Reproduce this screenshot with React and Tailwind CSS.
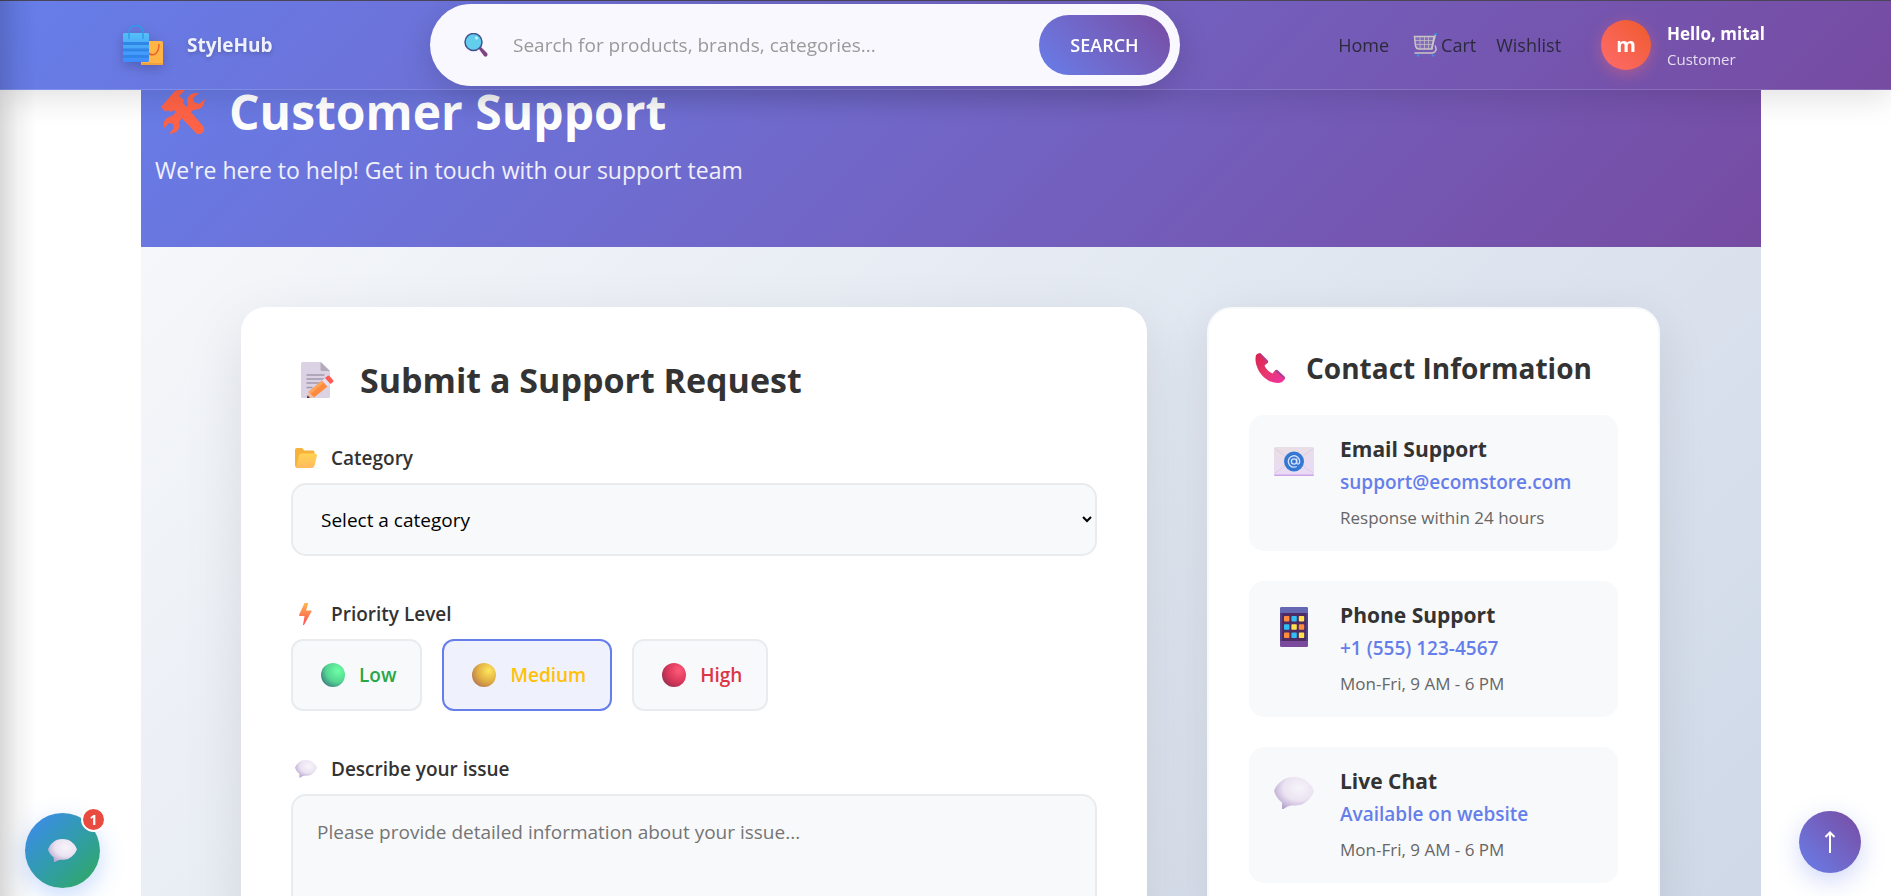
import React from "react";

const FONT = "font-['Open_Sans','Noto_Sans',sans-serif]";

function BagsIcon() {
  return (
    <svg viewBox="0 0 40 40" className="size-10 shrink-0 drop-shadow-[0_4px_6px_rgba(0,0,0,0.2)]" aria-hidden="true">
      <defs>
        <linearGradient id="bagBlue" x1="0" y1="0" x2="0" y2="1">
          <stop offset="0" stopColor="#55c0f5" />
          <stop offset="1" stopColor="#3d8bff" />
        </linearGradient>
      </defs>
      <rect x="18" y="16" width="22" height="24" rx="1.5" fill="#ffb545" />
      <rect x="18" y="38" width="22" height="2" rx="1" fill="#f0a040" />
      <path d="M24 26q3 5 7 3.500 5-2 5-10.500" fill="none" stroke="#e8622f" strokeWidth="1.500" />
      <rect x="0" y="8" width="26" height="29" rx="1.500" fill="url(#bagBlue)" />
      <path d="M0 17h26v3H0zM0 23.500h26v3H0zM0 30h26v3H0z" fill="#2f86e6" />
      <path d="M6 14V8q0-7.500 7-7.500t7 7.500v6" fill="none" stroke="#2f9be8" strokeWidth="1.400" />
    </svg>
  );
}

function MagnifierIcon() {
  return (
    <svg viewBox="0 0 24 24" className="size-6 shrink-0" aria-hidden="true">
      <path d="M14.500 15.500l2-2 6.500 6.500q1 1.500 0 3t-3 0z" fill="#7e4482" />
      <circle cx="9.500" cy="9" r="8.500" fill="#63cdec" stroke="#43518f" strokeWidth="1.500" />
      <circle cx="12.500" cy="5" r="1.500" fill="#c4f1ff" />
    </svg>
  );
}

function CartIcon() {
  return (
    <svg viewBox="0 0 24 24" className="size-6 shrink-0" aria-hidden="true">
      <path d="M1.500 3.500h19.500L19 16H5.500Q3 15.500 2.500 13z" fill="#c9c4c6" fillOpacity="0.2" stroke="#c9c4c6" strokeWidth="1.500" />
      <path d="M2 7.500h18M2.500 11.500h17M7 3v13M11.500 3v13M15.500 3v13" stroke="#c9c4c6" strokeWidth="0.700" />
      <path d="M22.500 1.500 18.500 16M22 12.500q3 6-2.500 7.500H1.500" fill="none" stroke="#c9c4c6" strokeWidth="1.500" />
      <path d="M21.500 1.200H24" stroke="#3792dc" strokeWidth="2" />
      <circle cx="5" cy="22.500" r="1.300" fill="#3792dc" />
      <circle cx="20" cy="22.500" r="1.300" fill="#3792dc" />
    </svg>
  );
}

function ToolsIcon() {
  return (
    <svg viewBox="0 0 44 44" className="size-11 shrink-0" aria-hidden="true">
      <g fill="#ff6347">
        <path d="M0 17 13 2q2-2 5-2h6l-6 6 5 4-1 3 20 23q3 4-1 7t-7-1L13 20l-3 2-4-2-1 2z" />
        <path d="M35 3q-8 0-9 8l1 4-6 7 5 5 6-7q11 1 12-11l-6 5-5-2-1-4 6-5z" />
        <path d="m15 22 6 6-3 4q2 8-5 11l-5 1 5-6-1-4-4-1-5 5q-2-10 8-12z" />
      </g>
    </svg>
  );
}

function MemoIcon() {
  return (
    <svg viewBox="0 0 34 36" className="h-9 w-[34px] shrink-0" aria-hidden="true">
      <path d="M1.500 0H20l9 9v25.500q0 1.500-1.500 1.500h-26Q0 36 0 34.500v-33Q0 0 1.500 0z" fill="#dbd2e4" />
      <path d="M19.500 0 29 9h-8q-1.500 0-1.500-1.500z" fill="#b3aabb" />
      <path d="M5.500 13h18M5.500 17h18M5.500 21h14M5.500 25.500h6" stroke="#a299ad" strokeWidth="1.300" />
      <path d="M7.500 30 21 18.500l5.500 6L13 35.500z" fill="#ff8a3d" />
      <path d="M7.500 30 21 18.500l2 2L9.500 32z" fill="#ffa45c" />
      <path d="m21 18.500 3-2.500 5.500 6-3 2.500z" fill="#e6e0f2" />
      <path d="m24 16 2.500-2q1-1 2 0l3.500 4q1 1 0 2l-2.500 2z" fill="#ff5a4e" />
      <path d="M7.500 30 13 35.500 6 36z" fill="#eebba5" />
      <path d="M6.500 33.500 9 35.700 6 36z" fill="#3d2030" />
    </svg>
  );
}

function FolderIcon() {
  return (
    <svg viewBox="0 0 22 20" className="h-5 w-[22px] shrink-0" aria-hidden="true">
      <defs>
        <linearGradient id="folder" x1="0" y1="0" x2="0" y2="1">
          <stop offset="0" stopColor="#ffd452" />
          <stop offset="1" stopColor="#ffba5e" />
        </linearGradient>
      </defs>
      <path d="M0 2Q0 0 2 0h5l2.500 2.500H18q1.500 0 1.500 2V17L3 20Q0 20 0 17z" fill="#f7b23b" />
      <path d="M4 7.500Q4.500 5.500 6.500 5.500H20q2 0 2 2l-2.500 10q-.5 2.500-3 2.500H2q-1 0-.5-2z" fill="url(#folder)" />
    </svg>
  );
}

function BoltIcon() {
  return (
    <svg viewBox="0 0 22 22" className="size-[22px] shrink-0" aria-hidden="true">
      <defs>
        <linearGradient id="bolt" x1="0" y1="0" x2="0" y2="1">
          <stop offset="0" stopColor="#ffb64c" />
          <stop offset="1" stopColor="#fb4e57" />
        </linearGradient>
      </defs>
      <path d="M9.500 0h3q1 0 .6 1L11 7.500h5q1 0 .5 1L9 22H8l1.500-9H5q-1.500 0-1-1z" fill="url(#bolt)" />
    </svg>
  );
}

function BubbleIcon({ className, id }) {
  return (
    <svg viewBox="0 0 40 32" className={className} aria-hidden="true">
      <defs>
        <radialGradient id={id} cx="0.62" cy="0.35" r="0.7">
          <stop offset="0" stopColor="#f7f4fa" />
          <stop offset="0.55" stopColor="#ebe3f1" />
          <stop offset="1" stopColor="#b7a5d0" />
        </radialGradient>
      </defs>
      <path d="M20 0q8 0 13 4.500Q38 8 40 14q-2 6-7 10-4 4-11 4.500h-5q-4 .5-6 2.500-2 1.500-3 1v-6.500Q2 21 0 14q2-6 7-9.500Q12 0 20 0z" fill={`url(#${id})`} />
    </svg>
  );
}

function Ball({ id, light, mid, dark }) {
  return (
    <svg viewBox="0 0 24 24" className="size-6 shrink-0" aria-hidden="true">
      <defs>
        <radialGradient id={id} cx="0.7" cy="0.32" r="0.8">
          <stop offset="0" stopColor={light} />
          <stop offset="0.6" stopColor={mid} />
          <stop offset="1" stopColor={dark} />
        </radialGradient>
      </defs>
      <circle cx="12" cy="12" r="12" fill={`url(#${id})`} />
    </svg>
  );
}

function ReceiverIcon() {
  return (
    <svg viewBox="0 0 30 30" className="size-[30px] shrink-0" aria-hidden="true">
      <defs>
        <linearGradient id="receiver" x1="0" y1="0" x2="1" y2="1">
          <stop offset="0" stopColor="#d8204f" />
          <stop offset="0.5" stopColor="#e9386c" />
          <stop offset="1" stopColor="#ee2fa5" />
        </linearGradient>
      </defs>
      <path d="M1 2Q3-.5 5.500.5L13 8q.5 1-.5 2l-3 2.500q2 5 8 8l2.500-3q1-1 2.500 0l7 6.500q1 1.500-.5 3-2 3-6 3Q12 30 4.500 19-1 10 1 2z" fill="url(#receiver)" />
      <path d="M4 0q1-.3 2 .8l7 7.200q.5 1-.8 2z" fill="#b13d94" />
      <path d="M20 18q1.500-2 3-.5l6.500 6q1 1.500 0 2.500z" fill="#a9418f" />
    </svg>
  );
}

function EmailIcon() {
  return (
    <svg viewBox="0 0 40 29" className="w-10" aria-hidden="true">
      <defs>
        <linearGradient id="mail" x1="0" y1="0" x2="0.3" y2="1">
          <stop offset="0" stopColor="#e9dfe2" />
          <stop offset="1" stopColor="#e9daf6" />
        </linearGradient>
      </defs>
      <rect width="40" height="29" rx="1.500" fill="url(#mail)" />
      <path d="M1 1.500 16 13M39 1.500 24 13M1 26l13-9M39 26l-13-9" stroke="#d6c8de" strokeWidth="0.800" />
      <path d="M0 27.500h40q0 1.500-1.500 1.500h-37Q0 29 0 27.500z" fill="#cba6e8" />
      <circle cx="20" cy="14.500" r="10" fill="#3478d4" />
      <circle cx="20" cy="14.500" r="2.600" fill="none" stroke="#d9e3fa" strokeWidth="1.300" />
      <path d="M22.700 11.500v4q.3 2 1.800 1.500 1.200-.5 1.200-2.500a5.700 5.700 0 1 0-3 5" fill="none" stroke="#d9e3fa" strokeWidth="1.300" />
    </svg>
  );
}

const KEYS = ["#ff8b3d", "#33bdf5", "#ffe14f", "#33bdf5", "#ffe14f", "#ff8b3d", "#ff8b3d", "#33bdf5", "#ffe14f"];

function MobileIcon() {
  return (
    <svg viewBox="0 0 28 40" className="h-10 w-7" aria-hidden="true">
      <rect width="28" height="40" rx="2" fill="#50408d" />
      <path d="M0 6V2q0-2 2-2h24q2 0 2 2v4z" fill="#6468b3" />
      <path d="M0 34h28v4q0 2-2 2H2q-2 0-2-2z" fill="#7b4a9c" />
      <rect x="2" y="6" width="24" height="28" fill="#4e2c62" />
      {KEYS.map((fill, i) => (
        <rect key={i} x={4 + (i % 3) * 7.4} y={9 + Math.floor(i / 3) * 8.3} width="5.400" height="5.400" rx="0.800" fill={fill} />
      ))}
    </svg>
  );
}

function Header() {
  return (
    <header className="fixed inset-x-0 top-0 z-20 flex h-[90px] items-center border-t border-b border-t-[#4a4658] border-b-white/15 bg-linear-135 from-[#667eea] to-[#764ba2] pr-[126px] pl-[123px] shadow-[0_8px_32px_rgba(0,0,0,0.12)]">
      <a href="#top" className="flex w-[307px] shrink-0 items-center gap-6 text-[19px] font-bold text-[#eef0fb] [text-shadow:0_2px_4px_rgba(0,0,0,0.2)]">
        <BagsIcon />
        StyleHub
      </a>
      <form
        className="flex h-[82px] max-w-[750px] flex-1 items-center rounded-[41px] bg-[#f8f8fe] pr-[10px] pl-[34px] shadow-[0_8px_32px_rgba(0,0,0,0.15)]"
        onSubmit={(e) => e.preventDefault()}
      >
        <MagnifierIcon />
        <input
          type="text"
          aria-label="Search"
          placeholder="Search for products, brands, categories..."
          className="min-w-0 flex-1 bg-transparent pl-[25px] text-[19px] outline-none placeholder:text-[#9a9a9a]"
        />
        <button type="submit" className="h-[60px] w-[131px] rounded-[30px] bg-linear-45 from-[#667eea] to-[#764ba2] text-[18px] font-semibold text-white">
          SEARCH
        </button>
      </form>
      <nav className="ml-auto flex items-center text-[18px] text-[#2b2a3c]">
        <a href="#home">Home</a>
        <a href="#cart" className="ml-6 flex items-center gap-1">
          <CartIcon />
          Cart
        </a>
        <a href="#wishlist" className="ml-5">Wishlist</a>
      </nav>
      <div className="ml-10 flex items-center gap-4">
        <span className="flex size-[50px] items-center justify-center rounded-full bg-linear-45 from-[#ff6b6b] to-[#ee5a24] text-[20px] font-bold text-white shadow-[0_4px_15px_rgba(255,107,107,0.4)]">
          m
        </span>
        <span className="flex flex-col gap-px pt-[2px] whitespace-nowrap text-white">
          <span className="text-[17px] leading-6 font-bold">Hello, mital</span>
          <span className="text-[15px] leading-6 text-white/80">Customer</span>
        </span>
      </div>
    </header>
  );
}

function Hero() {
  return (
    <section className="flex h-[247px] flex-col bg-linear-135 from-[#667eea] to-[#764ba2] px-[14px] pt-20 text-white">
      <h1 className="flex items-center gap-6 pl-[6px] text-[48px] leading-[64px] font-bold">
        <ToolsIcon />
        Customer Support
      </h1>
      <p className="mt-[10px] text-[23px] leading-8 text-white/90">We're here to help! Get in touch with our support team</p>
    </section>
  );
}

const PRIORITIES = [
  { name: "Low", text: "text-[#28a745]", ball: ["#6cffa5", "#55d492", "#3a7d80"] },
  { name: "Medium", text: "text-[#ffc107]", ball: ["#ffe75c", "#dfac43", "#b47752"] },
  { name: "High", text: "text-[#dc3545]", ball: ["#ff5a78", "#d9375a", "#97304f"] },
];

function SupportForm() {
  return (
    <form className="rounded-[25px] bg-white px-[50px] pt-11 pb-[50px] shadow-[0_20px_60px_rgba(0,0,0,0.1)]">
      <h2 className="flex items-center gap-[25px] pl-[10px] text-[34px] leading-[58px] font-bold text-[#333]">
        <MemoIcon />
        Submit a Support Request
      </h2>
      <label htmlFor="category" className="mt-8 flex items-center gap-[14px] pl-1 text-[19px] leading-[34px] font-semibold text-[#333]">
        <FolderIcon />
        Category
      </label>
      <select id="category" className="mt-2 h-[73px] w-full rounded-[15px] border-2 border-[#e9ecef] bg-[#f8f9fb] pl-6 text-[19px] text-black">
        <option>Select a category</option>
      </select>
      <fieldset>
        <legend className="flex items-center gap-[14px] pt-[41px] pl-1 text-[19px] leading-[34px] font-semibold text-[#333]">
          <BoltIcon />
          Priority Level
        </legend>
        <div className="mt-2 flex gap-5">
          {PRIORITIES.map((p) => (
            <label
              key={p.name}
              className={`flex h-[72px] items-center gap-[14px] rounded-xl border-2 border-[#e9ecef] bg-[#f8f9fb] pr-6 pl-7 text-[19px] font-semibold has-checked:border-[#667eea] has-checked:bg-[#eff1fd] ${p.text}`}
            >
              <input type="radio" name="priority" value={p.name} defaultChecked={p.name === "Medium"} className="sr-only" />
              <Ball id={`ball-${p.name}`} light={p.ball[0]} mid={p.ball[1]} dark={p.ball[2]} />
              {p.name}
            </label>
          ))}
        </div>
      </fieldset>
      <label htmlFor="issue" className="mt-[41px] flex items-center gap-[14px] pl-1 text-[19px] leading-[34px] font-semibold text-[#333]">
        <BubbleIcon id="bubble-label" className="w-[22px]" />
        Describe your issue
      </label>
      <textarea
        id="issue"
        rows={6}
        placeholder="Please provide detailed information about your issue..."
        className="mt-2 block w-full resize-none rounded-[15px] border-2 border-[#e9ecef] bg-[#f8f9fb] px-6 py-[22px] text-[19px] leading-7 placeholder:text-[#757575]"
      />
    </form>
  );
}

const CONTACTS = [
  { title: "Email Support", link: "support@ecomstore.com", href: "mailto:support@ecomstore.com", note: "Response within 24 hours", icon: <EmailIcon /> },
  { title: "Phone Support", link: "+1 (555) 123-4567", href: "tel:+15551234567", note: "Mon-Fri, 9 AM - 6 PM", icon: <MobileIcon /> },
  { title: "Live Chat", link: "Available on website", href: "#chat", note: "Mon-Fri, 9 AM - 6 PM", icon: <BubbleIcon id="bubble-chat" className="w-10" /> },
];

function ContactPanel() {
  return (
    <aside className="rounded-[25px] border-2 border-[#f8f9fb] bg-white px-10 pt-9 pb-10 shadow-[0_15px_50px_rgba(0,0,0,0.1)]">
      <h2 className="flex items-center gap-[21px] pl-[6px] text-[28px] leading-[46px] font-bold whitespace-nowrap text-[#333]">
        <ReceiverIcon />
        Contact Information
      </h2>
      <ul className="mt-6 flex flex-col gap-[30px]">
        {CONTACTS.map((c) => (
          <li key={c.title} className="flex h-[136px] items-start gap-[26px] rounded-[15px] bg-[#f8f9fb] pt-[18px] pl-[25px]">
            <span className="flex h-14 w-10 shrink-0 items-center justify-center">{c.icon}</span>
            <div className="whitespace-nowrap">
              <h3 className="text-[21px] leading-8 font-bold text-[#333]">{c.title}</h3>
              <a href={c.href} className="block text-[19px] leading-[34px] font-semibold text-[#667eea]">{c.link}</a>
              <p className="text-[17px] leading-[38px] text-[#666]">{c.note}</p>
            </div>
          </li>
        ))}
      </ul>
    </aside>
  );
}

export default function App() {
  return (
    <div id="top" className={`h-screen overflow-hidden bg-white ${FONT}`}>
      <Header />
      <main className="mr-[130px] ml-[141px]">
        <Hero />
        <div className="grid min-h-[1380px] grid-cols-[2fr_1fr] items-start gap-[60px] bg-linear-135 from-[#f5f7fa] to-[#c3cfe2] py-[60px] pr-[101px] pl-[100px]">
          <SupportForm />
          <ContactPanel />
        </div>
      </main>
      <div className="pointer-events-none fixed inset-y-0 left-0 z-30 w-9 bg-linear-to-r from-black/15 via-black/5 to-transparent" />
      <button type="button" aria-label="Open chat" className="fixed bottom-2 left-[25px] z-40 flex size-[75px] items-center justify-center rounded-full bg-linear-135 from-[#4285f4] to-[#34a853] shadow-[0_8px_25px_rgba(66,133,244,0.3)]">
        <BubbleIcon id="bubble-fab" className="w-[29px]" />
        <span className="absolute -top-[6px] -right-[6px] flex size-[25px] items-center justify-center rounded-full border-2 border-white bg-[#ea4b40] text-[14px] font-bold text-white">1</span>
      </button>
      <button type="button" aria-label="Back to top" className="fixed right-[30px] bottom-[23px] z-40 flex size-[62px] items-center justify-center rounded-full bg-linear-45 from-[#667eea] to-[#764ba2] text-white shadow-[0_8px_25px_rgba(102,126,234,0.3)]">
        <svg viewBox="0 0 12 22" className="h-[22px] w-3" fill="none" stroke="currentColor" strokeWidth="2" aria-hidden="true">
          <path d="M6 22V2M1.500 6 6 1.500 10.500 6" />
        </svg>
      </button>
    </div>
  );
}
